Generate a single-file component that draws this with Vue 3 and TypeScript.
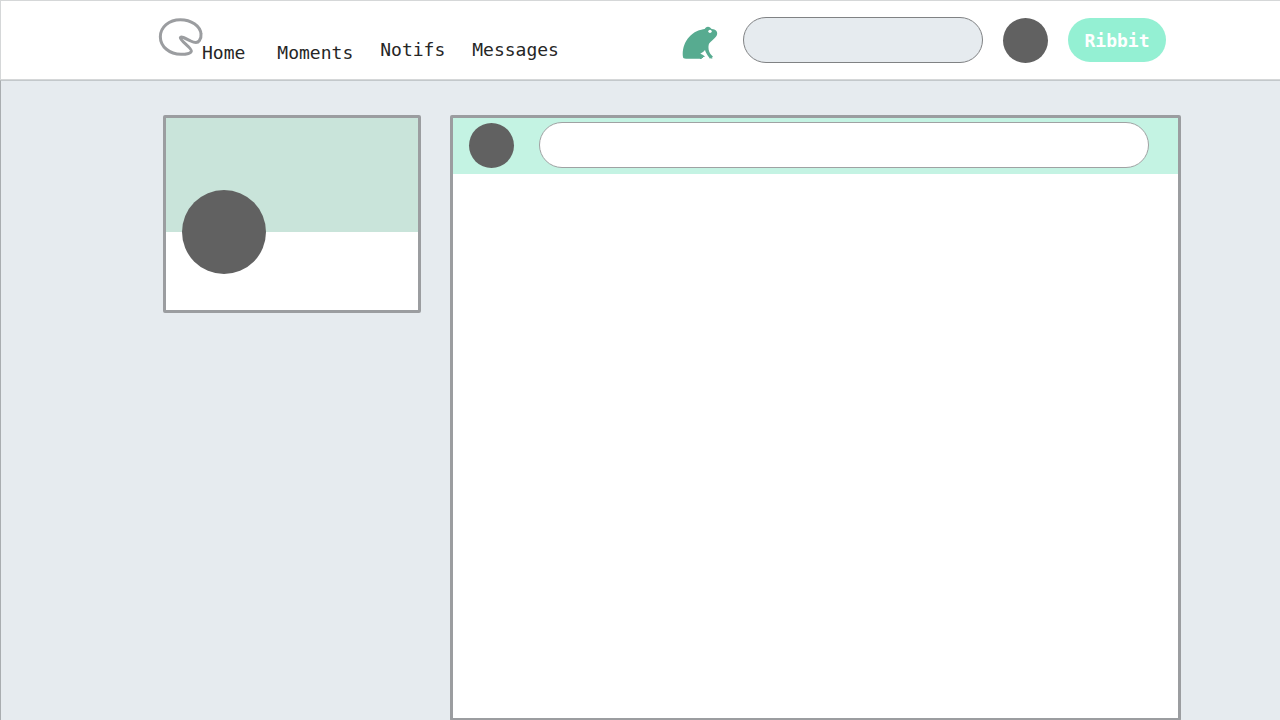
<script setup lang="ts">
import { ref } from 'vue'

interface NavItem {
  label: string
  href: string
}

const primary: NavItem[] = [
  { label: 'Home', href: '#home' },
  { label: 'Moments', href: '#moments' },
]
const secondary: NavItem[] = [
  { label: 'Notifs', href: '#notifs' },
  { label: 'Messages', href: '#messages' },
]

const query = ref('')
const post = ref('')
</script>

<template>
  <div class="page">
    <header class="topbar">
      <svg class="lilypad" viewBox="12 6 126 126" aria-hidden="true">
        <path
          d="M76 17 C42 17 16 39 16 68 C16 98 44 121 78 121 C92 121 106 119 109 112 C112 103 75 80 76 71 C78 65 95 75 107 81 C117 86 128 88 133 80 C137 74 139 67 138 60 C136 35 108 17 76 17 Z"
          fill="none"
          stroke="#9b9da0"
          stroke-width="9"
          stroke-linejoin="round"
        />
      </svg>
      <nav class="nav" aria-label="Main">
        <div class="links primary">
          <a v-for="item in primary" :key="item.label" :href="item.href">{{ item.label }}</a>
        </div>
        <div class="links secondary">
          <a v-for="item in secondary" :key="item.label" :href="item.href">{{ item.label }}</a>
        </div>
      </nav>
      <svg class="frog" viewBox="6 6 108 102" aria-hidden="true">
        <path
          fill="#57ab90"
          d="M9 99 C7 84 9 67 19 50 C29 34 45 20 64 17 C68 16 71 16 74 15 C76 11 79 8 84 8 C89 8 92 11 95 15 C102 15 109 18 111 24 C113 31 110 37 105 41 C99 48 92 52 88 58 C85 63 85 70 86 77 C88 86 92 91 97 96 C100 99 99 101 95 99 L97 103 C97 105 94 104 92 101 C92 105 89 105 88 101 L84 96 C80 90 77 85 75 78 C72 82 67 86 61 89 C66 91 70 93 74 97 C75 100 71 99 68 98 C71 102 69 103 65 101 C67 105 64 106 59 104 L18 104 C12 104 9 103 9 99 Z"
        />
        <circle cx="90" cy="22" r="5" fill="#fff" />
      </svg>
      <input v-model="query" class="search" type="search" aria-label="Search" />
      <button class="avatar account" type="button" aria-label="Account"></button>
      <button class="ribbit" type="button">Ribbit</button>
    </header>

    <div class="content">
      <aside class="profile">
        <div class="cover"></div>
        <div class="portrait"></div>
      </aside>
      <main class="feed">
        <form class="composer" @submit.prevent>
          <span class="avatar"></span>
          <input v-model="post" class="post" type="text" aria-label="New ribbit" />
        </form>
      </main>
    </div>
  </div>
</template>

<style>
body {
  background: #e6ebef;
}
</style>

<style scoped>
.page,
.page * {
  box-sizing: border-box;
}

.page {
  display: flex;
  flex-direction: column;
  height: 100vh;
  overflow: hidden;
  background: #e6ebef;
  font-family: Consolas, 'DejaVu Sans Mono', monospace;
}

.topbar {
  display: flex;
  flex: none;
  align-items: center;
  height: 80px;
  padding: 0 114px 0 158px;
  background: #fff;
  border: 1px solid #d5d7d8;
  border-right: 0;
}

.lilypad {
  width: 42px;
  height: 42px;
  margin: 0 1px 6px 0;
  flex: none;
  overflow: visible;
}

.nav {
  display: flex;
  gap: 27px;
  margin-right: auto;
  align-items: flex-start;
}

.links {
  display: flex;
}

.links a {
  color: #262626;
  font-size: 18px;
  line-height: 24px;
  text-decoration: none;
}

.primary {
  gap: 32px;
  padding-top: 26px;
}

.secondary {
  gap: 27px;
  padding-top: 23px;
}

.frog {
  width: 36px;
  height: 34px;
  margin: 6px 25px 0 0;
  flex: none;
}

.search {
  width: 240px;
  height: 46px;
  margin-right: 20px;
  padding: 0 20px;
  border: 1px solid #808284;
  border-radius: 23px;
  background: #e6ebef;
  appearance: none;
  font: inherit;
  font-size: 18px;
}

.avatar {
  flex: none;
  width: 45px;
  height: 45px;
  padding: 0;
  border: 0;
  border-radius: 50%;
  background: #616161;
}

.account {
  margin-right: 20px;
}

.ribbit {
  width: 98px;
  height: 44px;
  padding: 0;
  border: 0;
  border-radius: 22px;
  background: #94f0d3;
  color: #fff;
  font: inherit;
  font-size: 18px;
  font-weight: 700;
}

.content {
  display: flex;
  flex: 1;
  align-items: flex-start;
  gap: 29px;
  padding: 34px 99px 0 162px;
  border-top: 1px solid #c3c8cb;
  border-left: 1px solid #a9adb0;
}

.profile,
.feed {
  border: 3px solid #9b9da0;
  border-radius: 2px;
  background: #fff;
}

.profile {
  position: relative;
  flex: none;
  width: 258px;
  height: 198px;
}

.cover {
  height: 114px;
  background: #c9e4da;
}

.portrait {
  position: absolute;
  left: 16px;
  top: 72px;
  width: 84px;
  height: 84px;
  border-radius: 50%;
  background: #616161;
}

.feed {
  flex: 1;
  min-width: 0;
  min-height: calc(100vh - 114px);
}

.composer {
  display: flex;
  align-items: center;
  gap: 25px;
  height: 56px;
  padding: 0 29px 2px 16px;
  background: #c4f3e3;
}

.post {
  flex: 1;
  min-width: 0;
  height: 46px;
  padding: 0 20px;
  border: 1px solid #a0a2a3;
  border-radius: 23px;
  background: #fff;
  font: inherit;
  font-size: 18px;
}
</style>
